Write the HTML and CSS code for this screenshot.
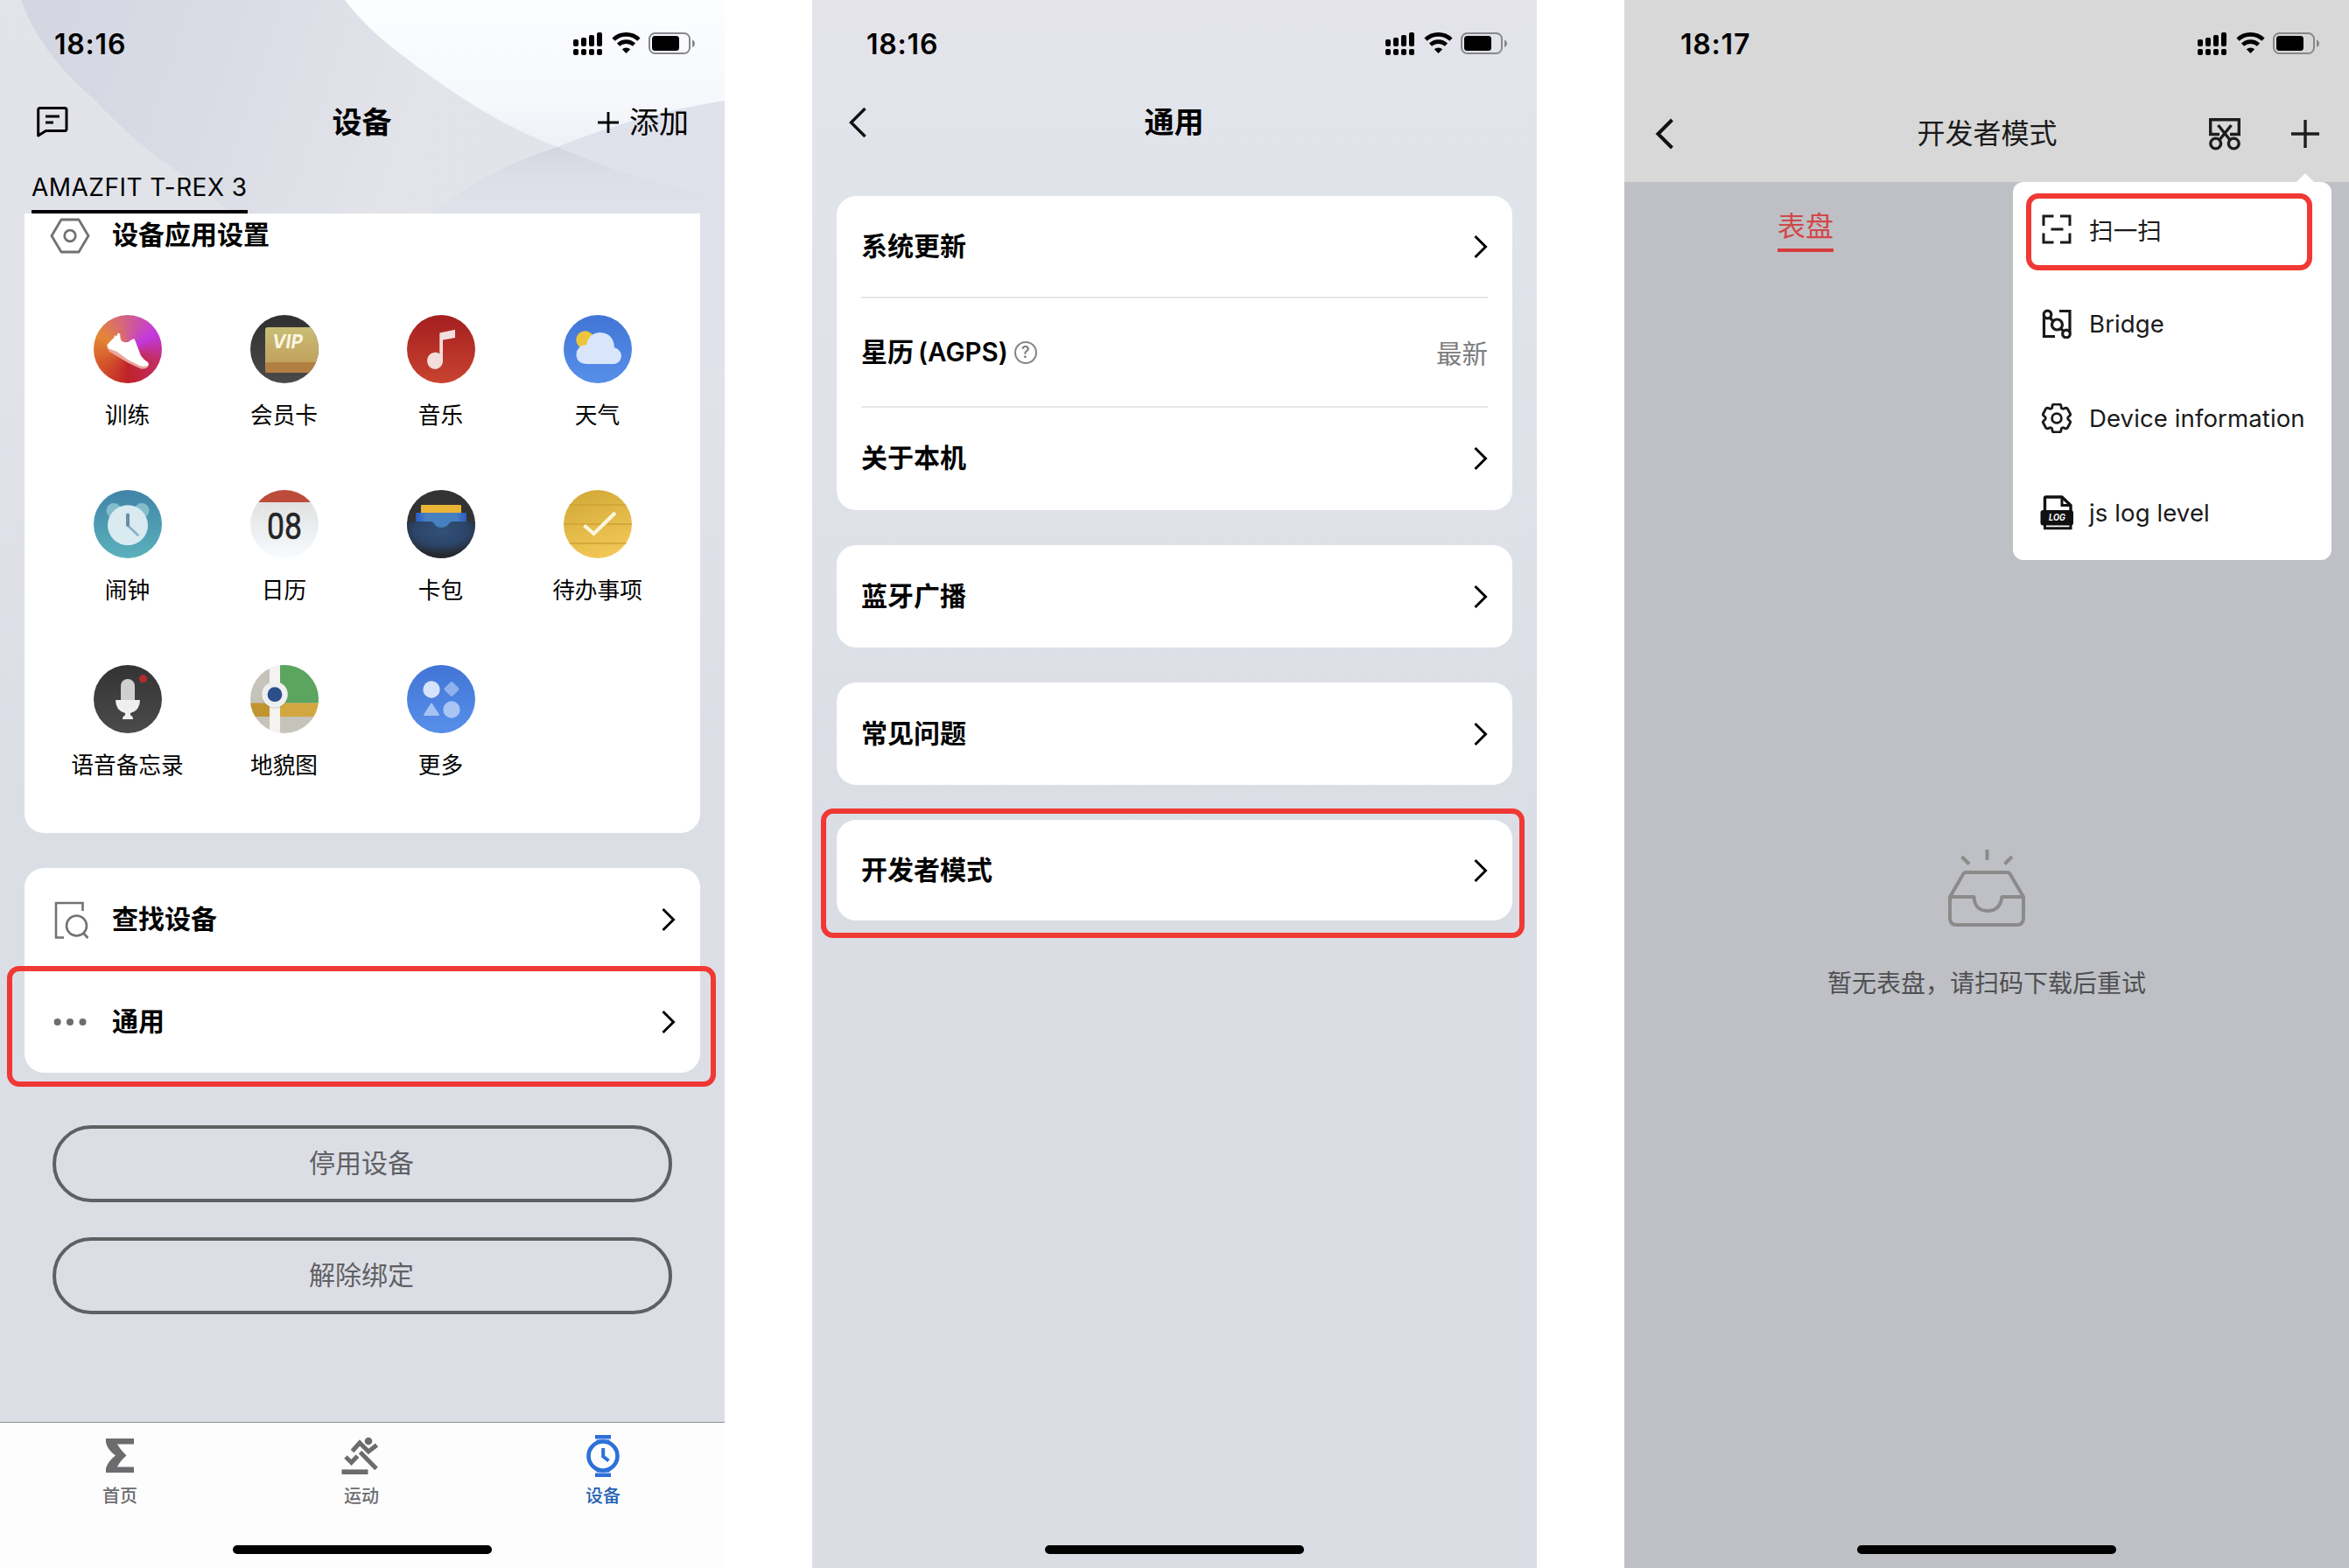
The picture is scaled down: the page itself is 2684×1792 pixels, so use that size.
FILE: index.html
```html
<!DOCTYPE html>
<html lang="zh-CN">
<head>
<meta charset="utf-8">
<title>设备</title>
<link rel="stylesheet" href="styles.css">
</head>
<body>
<svg class="defs" width="0" height="0" aria-hidden="true">
  <symbol id="signals" viewBox="0 0 140 28">
    <rect x="0" y="9" width="6" height="8" rx="2"/><rect x="9" y="7" width="6" height="10" rx="2"/><rect x="18" y="4" width="6" height="13" rx="2"/><rect x="27" y="1" width="6" height="16" rx="2"/>
    <rect x="0" y="20" width="6" height="7" rx="2"/><rect x="9" y="20" width="6" height="7" rx="2"/><rect x="18" y="20" width="6" height="7" rx="2"/><rect x="27" y="20" width="6" height="7" rx="2"/>
    <path d="M46 9.2A21 21 0 0 1 75 9.2M51.5 15.2A13 13 0 0 1 69.500 15.2" fill="none" stroke="#000" stroke-width="4.600"/>
    <path d="M60.500 25L55.800 20.300A7 7 0 0 1 65.200 20.300Z"/>
    <rect x="87" y="2" width="46" height="23" rx="6.500" fill="none" stroke="#87888b" stroke-width="2"/>
    <rect x="90" y="5" width="31" height="17" rx="3.500"/>
    <path d="M136 9.500c4 1.500 4 7 0 8.500Z" fill="#87888b"/>
  </symbol>
  <symbol id="next" viewBox="0 0 18 30"><path d="M3.500 3L15.500 15L3.500 27" fill="none" stroke="#000" stroke-width="3"/></symbol>
  <symbol id="back" viewBox="0 0 24 38"><path d="M20.500 3L4.500 19L20.500 35" fill="none" stroke="currentColor"/></symbol>
</svg>
<main class="screens">

  <section class="phone device">
    <svg class="backdrop" width="828" height="420" viewBox="0 0 828 420" aria-hidden="true">
      <defs>
        <linearGradient id="band" x1="0" y1="0" x2="1" y2=".1"><stop offset="0" stop-color="#d3d6e1"/><stop offset=".25" stop-color="#d8dae4"/><stop offset=".6" stop-color="#e3e4ea"/><stop offset="1" stop-color="#e2e3eb"/></linearGradient>
        <linearGradient id="glow" x1="0" y1="0" x2="0" y2="1"><stop offset="0" stop-color="#fcfdff"/><stop offset=".5" stop-color="#f6f8fc"/><stop offset="1" stop-color="#e6e9f0"/></linearGradient>
        <linearGradient id="hill" x1="0" y1="0" x2="0" y2="1"><stop offset="0" stop-color="#dfe2eb"/><stop offset=".8" stop-color="#dee0ea"/><stop offset="1" stop-color="#e0e2ea"/></linearGradient>
        <linearGradient id="hillshade" x1="0" y1="0" x2="0" y2="1"><stop offset="0" stop-color="#d3d6df"/><stop offset=".45" stop-color="#dcdfe7"/><stop offset="1" stop-color="#e0e2ea"/></linearGradient>
      </defs>
      <path d="M24 0Q45 60 107 113Q155 165 209 200Q236 222 268 244H828V0Z" fill="url(#band)"/>
      <path d="M394 0C425 40 455 60 503 95C545 124 585 148 637 168C700 196 765 216 828 225V0Z" fill="url(#glow)"/>
      <path d="M493 243C540 208 590 182 637 168C700 142 765 125 828 115V420H493Z" fill="url(#hill)"/>
      <path d="M493 243C540 208 590 182 637 168C700 196 765 216 828 225V244H493Z" fill="url(#hillshade)"/>
    </svg>
    <div class="status"><span>18:16</span><svg width="140" height="28"><use href="#signals"/></svg></div>
    <header class="bar">
      <svg width="40" height="40" viewBox="0 0 40 40" fill="none" stroke="#000" stroke-width="3"><path d="M3.700 35V5.500Q3.700 3.500 5.700 3.500H34Q36 3.500 36 5.500V27.500Q36 29.500 34 29.500H12.500Z" stroke-linejoin="round"/><path d="M12 13H28M12 20H21"/></svg>
      <h1>设备</h1>
      <a class="add"><svg width="26" height="26" viewBox="0 0 26 26"><path d="M13 1V25M1 13H25" stroke="#000" stroke-width="2.800"/></svg>添加</a>
    </header>
    <nav class="models"><span>AMAZFIT T-REX 3</span></nav>

    <section class="card apps">
      <div class="apps-title">
        <svg width="48" height="44" viewBox="0 0 48 44" fill="none" stroke="#727272" stroke-width="2.800"><path d="M14 4H34L45 22.500L34 41H14L3 22.500Z" stroke-linejoin="round"/><circle cx="24" cy="22.500" r="6.300"/></svg>
        <h2>设备应用设置</h2>
      </div>
      <div class="app-grid">
        <div class="app"><span class="icon training"><svg viewBox="0 0 78 78"><path d="M15.500 37L18 42L40 55L54 61.500Q62 62 63 57L55 56L26 40Z" fill="#e9a79c"/><path d="M15.300 34L23.500 25.500L24 23L26 24.500L27.500 21Q30 19.500 30.500 24C30 31 35 32 40 30.800Q44 27 46.500 27.300C49 33 51 39 54 46.500Q57 51 62 54Q64 57 61 58.300Q55 59.500 51 57L40 51.500L26 41.500L17 38.500Q15 36.500 15.300 34Z" fill="#fff"/></svg></span><p>训练</p></div>
        <div class="app"><span class="icon vip"><svg viewBox="0 0 78 78"><defs><linearGradient id="gold" x1="0" y1="0" x2="0" y2="1"><stop offset="0" stop-color="#c9bd75"/><stop offset="1" stop-color="#bf9a58"/></linearGradient></defs><rect x="17" y="14" width="70" height="52" rx="3" fill="url(#gold)"/><path d="M17 54H87V66H20Q17 66 17 63Z" fill="#b27f43"/><text x="25" y="38" class="vip-text" textLength="35" lengthAdjust="spacingAndGlyphs">VIP</text></svg></span><p>会员卡</p></div>
        <div class="app"><span class="icon music"><svg viewBox="0 0 78 78"><path d="M37.300 20.500L55 16.700V26L41 28.500V51A9 9.500 0 1 1 37.300 44.500Z" fill="#f3dedc"/></svg></span><p>音乐</p></div>
        <div class="app"><span class="icon weather"><svg viewBox="0 0 78 78"><circle cx="24.500" cy="28.500" r="10.200" fill="#edc53c"/><path d="M26 56Q14.500 55 14.500 45Q15 35 26 34Q29 20 42 20Q57 21 58 37Q66 40 66 47Q65 55 58 56Z" fill="#d8e5fa"/></svg></span><p>天气</p></div>
        <div class="app"><span class="icon alarm"><svg viewBox="0 0 78 78"><circle cx="23" cy="23.500" r="8.500" fill="#85bccb"/><circle cx="55" cy="23.500" r="8.500" fill="#85bccb"/><circle cx="39" cy="40.300" r="23" fill="#d9eaf0"/><path d="M39 40.500L50.500 51.500" stroke="#88afc9" stroke-width="2.600" stroke-linecap="round"/><path d="M39 28.500V40" stroke="#6b8da6" stroke-width="4" stroke-linecap="round"/></svg></span><p>闹钟</p></div>
        <div class="app"><span class="icon calendar"><svg viewBox="0 0 78 78"><rect width="78" height="14" fill="#bd4b39"/><text x="19" y="56" class="date-text" textLength="40" lengthAdjust="spacingAndGlyphs">08</text></svg></span><p>日历</p></div>
        <div class="app"><span class="icon wallet"><svg viewBox="0 0 78 78"><defs><radialGradient id="pocket" cx=".5" cy=".25" r=".65"><stop offset="0" stop-color="#315079"/><stop offset=".6" stop-color="#2c4569"/><stop offset="1" stop-color="#262a30"/></radialGradient><linearGradient id="slip"><stop offset="0" stop-color="#2c5cc4"/><stop offset=".2" stop-color="#4680c0"/><stop offset=".8" stop-color="#4680c0"/><stop offset="1" stop-color="#2c5cc4"/></linearGradient></defs><rect x="16" y="17" width="46" height="12" rx="1" fill="#eab536"/><rect x="10" y="26" width="58" height="20" rx="1" fill="url(#slip)"/><path d="M0 36H26Q30 36 31.500 39Q34 43 39.500 43Q45 43 47.500 39Q49 36 53 36H78V78H0Z" fill="url(#pocket)"/></svg></span><p>卡包</p></div>
        <div class="app"><span class="icon todo"><svg viewBox="0 0 78 78"><path d="M0 17H78M0 39H78M0 61H78" stroke="#cfa037" stroke-width="1.600"/><path d="M23.500 40.500L34.500 50L59 26" fill="none" stroke="#fdf6df" stroke-width="4.200"/></svg></span><p>待办事项</p></div>
        <div class="app"><span class="icon voice"><svg viewBox="0 0 78 78"><path d="M31 41V24A8 8 0 0 1 47 24V41Z" fill="#cfcfcf"/><path d="M25 40H53Q53 52 42 55V57.500Q45 58 45 62H33Q33 58 36 57.500V55Q25 52 25 40Z" fill="#efefef"/><circle cx="56.500" cy="15.700" r="4.600" fill="#b32a2a"/></svg></span><p>语音备忘录</p></div>
        <div class="app"><span class="icon map"><svg viewBox="0 0 78 78"><rect x="34" width="44" height="43.500" fill="#5ba560"/><rect y="43.500" width="34" height="15.500" fill="#c0942f"/><rect x="34" y="43.500" width="44" height="15.500" fill="#d2a73f"/><rect x="22" width="12" height="78" fill="#f4f3f0"/><circle cx="28" cy="35" r="15" fill="#000" opacity=".12"/><circle cx="28" cy="33.700" r="14.800" fill="#eeeff1"/><circle cx="28" cy="33.700" r="8.400" fill="#2c4f8c"/></svg></span><p>地貌图</p></div>
        <div class="app"><span class="icon more"><svg viewBox="0 0 78 78"><circle cx="28" cy="28" r="9.700" fill="#d6e4fb"/><rect x="44.500" y="21" width="13" height="13" rx="2" transform="rotate(45 51 27.500)" fill="#8fb2ef"/><path d="M28 44.500L36 57H20Z" fill="#a5c2f3" stroke="#a5c2f3" stroke-width="2" stroke-linejoin="round"/><circle cx="51" cy="51" r="9.700" fill="#a9c5f4"/></svg></span><p>更多</p></div>
      </div>
    </section>

    <section class="card actions">
      <a class="row"><svg width="48" height="48" viewBox="0 0 48 48" fill="none" stroke="#727272" stroke-width="2.600"><path d="M17 44.500H8V5H38.500V14"/><circle cx="31.500" cy="31" r="11.500"/><path d="M39 39L44.500 45"/></svg><h2>查找设备</h2><svg class="next" width="18" height="30"><use href="#next"/></svg></a>
      <a class="row"><svg width="48" height="48" viewBox="0 0 48 48" fill="#6d6d6d"><circle cx="9.700" cy="24" r="4"/><circle cx="24" cy="24" r="4"/><circle cx="38.500" cy="24" r="4"/></svg><h2>通用</h2><svg class="next" width="18" height="30"><use href="#next"/></svg></a>
      <div class="mark mark-general"></div>
    </section>

    <div class="buttons"><button>停用设备</button><button>解除绑定</button></div>

    <nav class="tabs">
      <a><svg width="48" height="48" viewBox="0 0 48 48"><path d="M8 4H40V10.500H21Q24 16 31.500 23.500Q24 30 21 36.500H40V43H8V38Q11 29 19 23.500Q9 16 8 8Z" fill="#6c6c6e"/></svg>首页</a>
      <a><svg width="48" height="48" viewBox="0 0 48 48" fill="none" stroke="#6c6c6e" stroke-width="5"><circle cx="32" cy="7" r="4.300" fill="#6c6c6e" stroke="none"/><path d="M13.500 18.500L22 9L32 19L41.500 11.500M6 25L12.500 31.500L19.500 24M22.500 19.500L41 38.500"/><path d="M1.500 42.200H31.500" stroke-width="5.600"/></svg>运动</a>
      <a class="on"><svg width="48" height="48" viewBox="0 0 48 48" fill="#2e6fd8"><path d="M15 0H33V4.500H15ZM15 43.500H33V48H15Z"/><circle cx="24" cy="24" r="16.500" fill="none" stroke="#2e6fd8" stroke-width="4.600"/><path d="M14.500 9L17 5.500H31L33.500 9ZM14.500 39L17 42.500H31L33.500 39Z"/><path d="M24.200 15V24.500L30.500 29.500" fill="none" stroke="#2e6fd8" stroke-width="4"/></svg>设备</a>
    </nav>
    <div class="home-bar"></div>
  </section>

  <section class="phone general">
    <div class="status"><span>18:16</span><svg width="140" height="28"><use href="#signals"/></svg></div>
    <header class="bar"><svg class="back" width="24" height="38"><use href="#back"/></svg><h1>通用</h1></header>
    <div class="lists">
      <section class="card">
        <a class="row"><h2>系统更新</h2><svg class="next" width="18" height="30"><use href="#next"/></svg></a>
        <div class="row tall"><h2>星历 <span>(AGPS)</span></h2><i class="help">?</i><em>最新</em></div>
        <a class="row"><h2>关于本机</h2><svg class="next" width="18" height="30"><use href="#next"/></svg></a>
      </section>
      <section class="card"><a class="row"><h2>蓝牙广播</h2><svg class="next" width="18" height="30"><use href="#next"/></svg></a></section>
      <section class="card"><a class="row"><h2>常见问题</h2><svg class="next" width="18" height="30"><use href="#next"/></svg></a></section>
      <section class="card"><a class="row"><h2>开发者模式</h2><svg class="next" width="18" height="30"><use href="#next"/></svg></a><div class="mark mark-developer"></div></section>
    </div>
    <div class="home-bar"></div>
  </section>

  <section class="phone developer">
    <div class="top">
      <div class="status"><span>18:17</span><svg width="140" height="28"><use href="#signals"/></svg></div>
      <header class="bar">
        <svg class="back" width="24" height="38"><use href="#back"/></svg>
        <h1>开发者模式</h1>
        <div class="tools">
          <svg width="40" height="40" viewBox="0 0 40 40" fill="none" stroke="#1d1d1d" stroke-width="3.400"><path d="M14 20.500H3.700V3.700H36.300V20.500H26"/><path d="M12.500 10L26.500 27.500M27.500 10L13.500 27.500"/><circle cx="9.700" cy="31" r="5.900"/><circle cx="30.300" cy="31" r="5.900"/></svg>
          <svg width="34" height="34" viewBox="0 0 34 34"><path d="M17 1V33M1 17H33" stroke="#1d1d1d" stroke-width="3.400"/></svg>
        </div>
      </header>
    </div>
    <nav class="faces"><span>表盘</span></nav>
    <div class="empty">
      <svg width="92" height="92" viewBox="0 0 92 92" fill="none" stroke="#8b8b8b" stroke-width="4"><path d="M46.500 2V14M17.500 10L26 18.500M75 10L66.500 18.500"/><path d="M4 56L19.500 29.500Q20.500 28 22.500 28H69.500Q71.500 28 72.500 29.500L88 56V80Q88 88 80 88H12Q4 88 4 80ZM4 56H31.500C32 67 38 72 47 72C56 72 62 67 63.500 56H88" stroke-linejoin="round"/></svg>
      <p>暂无表盘，请扫码下载后重试</p>
    </div>
    <div class="menu">
      <a class="scan"><svg width="34" height="34" viewBox="0 0 34 34" fill="none" stroke="#1a1a1a" stroke-width="3"><path d="M2 13V2H13.500M21 2H32V13M2 21.500V32H13.500M21 32H32V21.500M10.500 17H24.500"/></svg>扫一扫</a>
      <a><svg width="34" height="34" viewBox="0 0 34 34" fill="none" stroke="#1a1a1a" stroke-width="3.200"><path d="M2.500 7V31.500H15M20 2.500H32V27"/><circle cx="6.500" cy="6.500" r="4.300"/><circle cx="28" cy="28.500" r="4.300"/><circle cx="17.500" cy="18" r="6"/><path d="M9 10L13 14M21.500 22.500L25 25.500"/></svg>Bridge</a>
      <a><svg width="34" height="34" viewBox="-1 -1 34 34" fill="none" stroke="#1a1a1a" stroke-width="2.800" stroke-linejoin="round"><path d="M11.200 1.300Q11.500 .2 12.500 0H19.500Q20.500 .2 20.800 1.300L21.500 4.600L23 5.300L26.400 4.200Q27.500 4.200 28.300 5L31.500 11Q31.900 12.200 31.200 12.800L28.800 15V17L31.200 19.200Q31.900 19.800 31.500 21L28.300 27Q27.500 27.800 26.400 27.800L23 26.700L21.500 27.400L20.800 30.700Q20.500 31.800 19.500 32H12.500Q11.500 31.800 11.200 30.700L10.500 27.400L9 26.700L5.600 27.800Q4.500 27.800 3.700 27L.5 21Q.1 19.800 .8 19.200L3.200 17V15L.8 12.800Q.1 12.200 .5 11L3.700 5Q4.500 4.200 5.600 4.200L9 5.300L10.500 4.600Z"/><circle cx="16" cy="16" r="5.400"/></svg>Device information</a>
      <a><svg class="log" width="40" height="40" viewBox="0 0 40 40"><path d="M6.500 18V3.500Q6.500 2 8 2H26L36 11.500V18" fill="none" stroke="#111" stroke-width="3.400" stroke-linejoin="round"/><path d="M26 2V11.500H36" fill="none" stroke="#111" stroke-width="3"/><rect x="1.500" y="17" width="37.500" height="17.500" rx="3" fill="#111"/><path d="M6.500 33V37.700H36V33" fill="none" stroke="#111" stroke-width="3"/><text x="11" y="28.800" class="log-text" textLength="19" lengthAdjust="spacingAndGlyphs">LOG</text></svg>js log level</a>
      <div class="mark mark-scan"></div>
    </div>
    <div class="home-bar"></div>
  </section>
</main>
</body>
</html>
```
FILE: styles.css
```css
* { box-sizing: border-box; }
body { margin: 0; background: #fff; color: #000; font-family: Inter, "Noto Sans CJK SC", sans-serif; }
h1, h2, p { margin: 0; }
svg { display: block; flex: none; }
i, em { font-style: normal; }
.defs { position: absolute; }

.screens { display: flex; gap: 100px; width: 2684px; height: 1792px; overflow: hidden; }
.phone { position: relative; display: flex; flex-direction: column; width: 828px; height: 1792px; flex: none; }
.status { display: flex; align-items: center; justify-content: space-between; height: 100px; padding: 0 33px 0 62px; font-size: 32px; font-weight: 600; letter-spacing: .8px; }
.bar { display: grid; grid-template-columns: 1fr auto 1fr; align-items: center; height: 80px; padding: 0 41px 0 40px; }
.bar h1 { grid-column: 2; font-size: 34px; line-height: 48px; font-weight: 700; }
.bar .back { stroke-width: 3.4px; color: #111; }
.home-bar { position: absolute; left: 266px; bottom: 16px; width: 296px; height: 10px; border-radius: 5px; background: #000; }

.card { position: relative; background: #fff; border-radius: 22px; }
.row { display: flex; align-items: center; height: 117px; padding: 0 28px; }
.row h2, .apps-title h2 { font-size: 30px; line-height: 44px; font-weight: 700; }
.row h2 { padding-bottom: 1px; }
.row .next { margin-left: auto; }
.mark { position: absolute; border: 6px solid #f03834; border-radius: 14px; }

/* device */
.device { background: linear-gradient(#e3e4e9 0, #e1e2ea 400px, #dcdee6 900px, #dcdee6 100%); }
.backdrop { position: absolute; left: 0; top: 0; height: 420px; -webkit-mask-image: linear-gradient(#000 60%, transparent); mask-image: linear-gradient(#000 60%, transparent); }
.device .status, .device .bar, .models { position: relative; }
.add { display: flex; align-items: center; justify-self: end; gap: 11px; font-size: 34px; line-height: 48px; }
.models { height: 64px; padding-left: 36px; display: flex; }
.models span { height: 64px; padding-top: 6px; border-bottom: 4px solid #000; font-size: 28px; line-height: 56px; letter-spacing: .47px; }
.apps { height: 708px; margin: 0 28px; border-radius: 0 0 22px 22px; }
.apps-title { display: flex; align-items: center; gap: 24px; height: 50px; padding-left: 28px; }
.apps-title h2 { padding-bottom: 2px; }
.app-grid { display: grid; grid-template-columns: repeat(4, 179px); row-gap: 69px; padding: 66px 28px 0; }
.app { display: flex; flex-direction: column; align-items: center; gap: 21px; height: 131px; }
.app p { font-size: 25.700px; line-height: 32px; white-space: nowrap; }
.icon { flex: none; width: 78px; height: 78px; border-radius: 50%; overflow: hidden; }
.icon svg { width: 78px; height: 78px; }
.training { background: conic-gradient(from 0deg at 50% 50%, #d0608a, #c238e0 62deg, #c22e66 110deg, #bf2228 180deg, #cf4a2a 225deg, #e58634 295deg, #d0608a); }
.vip { background: linear-gradient(#303030, #4a4a4a); }
.music { background: linear-gradient(#a41f20, #c94330); }
.weather, .more { background: linear-gradient(#4275d6, #568fe9); }
.alarm { background: linear-gradient(#4084a8, #5bb1bb); }
.calendar { background: linear-gradient(#e0e0e0 15%, #f7fcff); }
.wallet { background: #333; }
.todo { background: linear-gradient(160deg, #d0a737, #f6cb59); }
.voice { background: linear-gradient(#333, #4b4b4b); }
.map { background: #c5c3ba; }
.vip-text { font: italic 700 22px Inter, sans-serif; fill: #fbf6e3; }
.date-text { font: 400 42px Roboto, sans-serif; fill: #232426; stroke: #232426; stroke-width: .6px; }
.actions { margin: 40px 28px 0; }
.actions .row h2 { margin-left: 24px; }
.mark-general { left: -20px; top: 112px; width: 810px; height: 138px; }
.buttons { display: flex; flex-direction: column; gap: 40px; padding: 60px 60px 0; }
.buttons button { height: 88px; padding: 0 2px 2px 0; border: 4px solid #5f6063; border-radius: 44px; background: none; color: #5f6063; font: 400 30px/44px Inter, "Noto Sans CJK SC", sans-serif; }
.tabs { display: grid; grid-template-columns: repeat(3, 276px); height: 167px; margin-top: auto; padding-right: 2px; border-top: 1px solid #8d8f94; background: #fdfdfe; }
.tabs a { display: flex; flex-direction: column; align-items: center; margin-left: -2px; padding-top: 14px; gap: 7px; font-size: 20px; line-height: 30px; font-weight: 500; color: #6c6c6e; }
.tabs .on { color: #2460b4; }

/* general */
.general { background: linear-gradient(#e4e4ea 0, #e2e4eb 120px, #dee1e8 600px, #dbdde5 1000px, #dbdde5 100%); }
.lists { display: flex; flex-direction: column; gap: 40px; padding: 44px 28px 0; }
.lists .row + .row { border-top: 2px solid #e6e7e9; }
.lists .row { height: 117px; margin: 0 28px; padding: 0; }
.lists .row:first-child:not(:last-child) { height: 115px; }
.lists .tall { height: 125px; }
.lists .row:last-child:not(:first-child) { height: 119px; padding-bottom: 2px; }
.row h2 span { margin-left: -2px; font-size: 29.500px; font-weight: 600; }
.help { width: 26px; height: 26px; margin-left: 7px; border: 2px solid #858585; border-radius: 50%; color: #777; font-size: 18px; line-height: 22px; font-weight: 500; text-align: center; }
.row em { margin-left: auto; padding-bottom: 1px; font-size: 29.500px; color: #7c7c7c; }
.mark-developer { left: -18px; top: -13px; width: 804px; height: 148px; }

/* developer */
.developer { background: #bfc0c5; }
.developer .status { padding-left: 64px; }
.top { height: 208px; background: #d8d8d8; }
.developer .bar { height: 105px; padding: 0 33px 0 34px; }
.developer .bar h1 { font-size: 32px; font-weight: 400; color: #1a1a1a; }
.developer .bar .back { stroke-width: 4px; }
.tools { display: flex; align-items: center; justify-self: end; gap: 55px; }
.faces { display: flex; padding-left: 175px; }
.faces span { height: 80px; padding-top: 29px; border-bottom: 4px solid #d63b3c; color: #d0484a; font-size: 32px; line-height: 44px; }
.empty { display: flex; flex-direction: column; align-items: center; gap: 41px; margin-top: 681px; }
.empty p { font-size: 28px; line-height: 44px; color: #4f5053; }
.menu { position: absolute; left: 444px; top: 208px; width: 364px; height: 432px; border-radius: 12px; background: #fff; }
.menu::before { content: ""; position: absolute; left: 324px; top: -10px; border: solid transparent; border-width: 0 10px 10px; border-bottom-color: #fff; }
.menu a { display: flex; align-items: center; gap: 20px; height: 108px; padding-left: 33px; padding-bottom: 1px; font-size: 27.600px; letter-spacing: .08px; color: #1a1a1a; white-space: nowrap; }
.menu .log { margin: 0 -3px; }
.log-text { font: italic 700 10px Inter, sans-serif; fill: #fff; }
.mark-scan { left: 15px; top: 13px; width: 327px; height: 88px; }
```
